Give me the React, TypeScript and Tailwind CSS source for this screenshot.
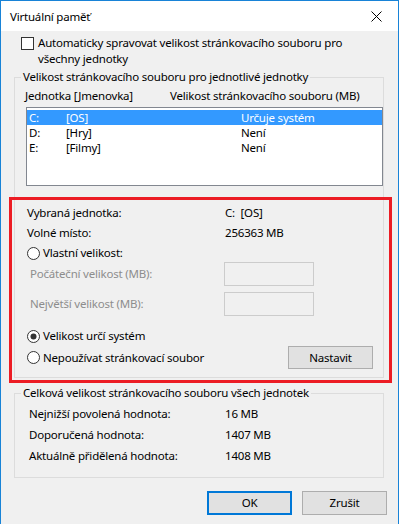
import React from 'react';

/**
 * Virtuální paměť — Windows 10 dialog for the paging file settings,
 * with the red highlight frame drawn over the "selected drive" part.
 */

const FONT = { fontFamily: '"Segoe UI", "Noto Sans", sans-serif' };

type Drive = { letter: string; label: string; size: string; selected?: boolean };

const DRIVES: Drive[] = [
  { letter: 'C:', label: '[OS]', size: 'Určuje systém', selected: true },
  { letter: 'D:', label: '[Hry]', size: 'Není' },
  { letter: 'E:', label: '[Filmy]', size: 'Není' },
];

function Radio({ checked = false }: { checked?: boolean }) {
  return (
    <svg width="13" height="13" viewBox="0 0 13 13" className="shrink-0">
      <circle cx="6.5" cy="6.5" r="6" fill="#fff" stroke="#333" strokeWidth="1" />
      {checked && <circle cx="6.5" cy="6.5" r="3" fill="#333" />}
    </svg>
  );
}

function Button({ children, primary = false }: { children: React.ReactNode; primary?: boolean }) {
  return (
    <div
      className={`flex items-center justify-center bg-[#e1e1e1] ${
        primary ? 'border-2 border-[#0078d7]' : 'border border-[#adadad]'
      } h-[24px] w-[85px]`}
    >
      {children}
    </div>
  );
}

export default function App() {
  return (
    <div
      className="relative w-[399px] h-[524px] overflow-hidden bg-[#f0f0f0] border-l border-r border-t border-[#1883d7] text-[11.5px] leading-[16px] tracking-[-0.2px] text-black"
      style={FONT}
    >
      {/* title bar */}
      <div className="flex items-center justify-between h-[30px] bg-white pl-[9px] pr-[16px]">
        <span className="pt-[1px]">Virtuální paměť</span>
        <svg width="11" height="11" viewBox="0 0 11 11" className="mt-[1px]">
          <path d="M0.5 0.5 L10.5 10.5 M10.5 0.5 L0.5 10.5" stroke="#000" strokeWidth="1" />
        </svg>
      </div>

      {/* auto checkbox */}
      <div className="flex pt-[4px] pl-[20px]">
        <div className="mt-[2px] h-[13px] w-[13px] shrink-0 border border-[#333] bg-white" />
        <span className="ml-[4px] whitespace-nowrap">
          Automaticky spravovat velikost stránkovacího souboru pro
          <br />
          všechny jednotky
        </span>
      </div>

      {/* per-drive group */}
      <fieldset className="ml-[13px] mt-[2px] w-[370px] border border-[#dcdcdc] pb-[8px]">
        <legend className="ml-[6px] px-[2px] leading-[16px]">
          Velikost stránkovacího souboru pro jednotlivé jednotky
        </legend>
        <div className="flex pt-[3px] pl-[10px] whitespace-nowrap">
          <span className="w-[145px]">Jednotka [Jmenovka]</span>
          <span>Velikost stránkovacího souboru (MB)</span>
        </div>
        <div className="ml-[11px] mt-[3px] h-[79px] w-[357px] border border-[#828790] bg-white pt-[2px]">
          {DRIVES.map((d) => (
            <div
              key={d.letter}
              className={`flex h-[15px] items-center pl-[2px] leading-[15px] ${
                d.selected ? 'bg-[#3399ff] text-white' : ''
              }`}
            >
              <span className="w-[37px]">{d.letter}</span>
              <span className="w-[175px]">{d.label}</span>
              <span>{d.size}</span>
            </div>
          ))}
        </div>

        <div className="mt-[19px] flex pl-[12px]">
          <span className="w-[198px]">Vybraná jednotka:</span>
          <span className="whitespace-pre">C:  [OS]</span>
        </div>
        <div className="mt-[4px] flex pl-[12px]">
          <span className="w-[198px]">Volné místo:</span>
          <span>256363 MB</span>
        </div>
        <div className="mt-[4px] flex items-center pl-[12px]">
          <Radio />
          <span className="ml-[3px]">Vlastní velikost:</span>
        </div>
        <div className="mt-[1px] flex h-[24px] items-center pl-[15px]">
          <span className="w-[194px] text-[#8d8d8d]">Počáteční velikost (MB):</span>
          <div className="h-[24px] w-[90px] border border-[#cccccc] bg-[#f0f0f0]" />
        </div>
        <div className="mt-[6px] flex h-[24px] items-center pl-[15px]">
          <span className="w-[194px] text-[#8d8d8d]">Největší velikost (MB):</span>
          <div className="h-[24px] w-[90px] border border-[#cccccc] bg-[#f0f0f0]" />
        </div>
        <div className="mt-[12px] flex items-center pl-[12px]">
          <Radio checked />
          <span className="ml-[3px]">Velikost určí systém</span>
        </div>
        <div className="mt-[2px] flex h-[23px] items-center pl-[12px] pr-[10px]">
          <Radio />
          <span className="ml-[3px]">Nepoužívat stránkovací soubor</span>
          <div className="ml-auto flex h-[23px] w-[85px] items-center justify-center border border-[#adadad] bg-[#e1e1e1]">
            Nastavit
          </div>
        </div>
      </fieldset>

      {/* totals group */}
      <fieldset className="ml-[13px] mt-[7px] w-[370px] border border-[#dcdcdc] pb-[13px]">
        <legend className="ml-[6px] px-[2px] leading-[16px]">
          Celková velikost stránkovacího souboru všech jednotek
        </legend>
        <div className="flex flex-col gap-[5px] pt-[5px] pl-[14px]">
          <div className="flex">
            <span className="w-[196px]">Nejnižší povolená hodnota:</span>
            <span>16 MB</span>
          </div>
          <div className="flex">
            <span className="w-[196px]">Doporučená hodnota:</span>
            <span>1407 MB</span>
          </div>
          <div className="flex">
            <span className="w-[196px]">Aktuálně přidělená hodnota:</span>
            <span>1408 MB</span>
          </div>
        </div>
      </fieldset>

      {/* dialog buttons */}
      <div className="mt-[13px] flex justify-end gap-[10px] pr-[11px]">
        <Button primary>OK</Button>
        <Button>Zrušit</Button>
      </div>

      {/* red highlight frame drawn over the dialog */}
      <div className="pointer-events-none absolute left-[8px] top-[196px] h-[186px] w-[383px] border-[3px] border-[#ec1c24]" />
    </div>
  );
}
